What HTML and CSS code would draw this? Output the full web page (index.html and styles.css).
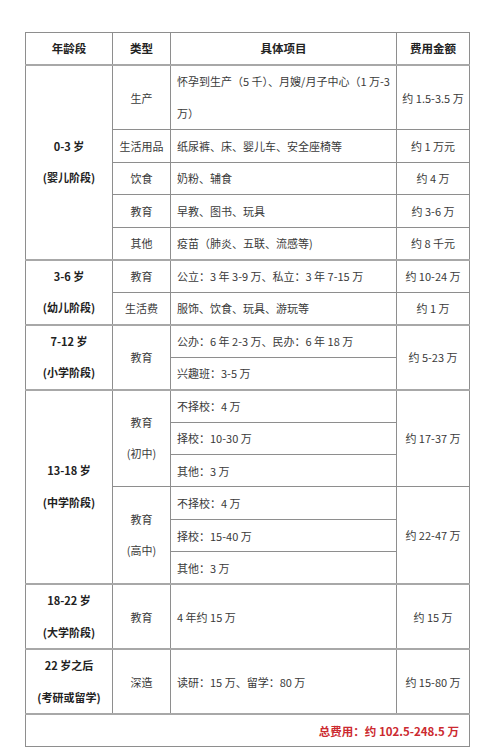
FILE: index.html
```html
<!DOCTYPE html>
<html lang="zh-CN">
<head>
<meta charset="utf-8">
<title>养孩子费用</title>
<link rel="stylesheet" href="styles.css">
</head>
<body>
<table class="cost">
  <colgroup>
    <col class="c-age"><col class="c-type"><col class="c-item"><col class="c-fee">
  </colgroup>
  <thead>
    <tr><th>年龄段</th><th>类型</th><th>具体项目</th><th>费用金额</th></tr>
  </thead>
  <tbody class="group">
    <tr class="r2">
      <td class="age" rowspan="5"><span class="two">0-3 岁<br>(婴儿阶段)</span></td>
      <td class="type">生产</td>
      <td class="item wrap">怀孕到生产（5 千）、月嫂/月子中心（1 万-3 万）</td>
      <td class="fee">约 1.5-3.5 万</td>
    </tr>
    <tr><td class="type">生活用品</td><td class="item">纸尿裤、床、婴儿车、安全座椅等</td><td class="fee">约 1 万元</td></tr>
    <tr><td class="type">饮食</td><td class="item">奶粉、辅食</td><td class="fee">约 4 万</td></tr>
    <tr><td class="type">教育</td><td class="item">早教、图书、玩具</td><td class="fee">约 3-6 万</td></tr>
    <tr><td class="type">其他</td><td class="item">疫苗（肺炎、五联、流感等)</td><td class="fee">约 8 千元</td></tr>
  </tbody>
  <tbody class="group">
    <tr>
      <td class="age" rowspan="2"><span class="two">3-6 岁<br>(幼儿阶段)</span></td>
      <td class="type">教育</td><td class="item">公立：3 年 3-9 万、私立：3 年 7-15 万</td><td class="fee">约 10-24 万</td>
    </tr>
    <tr><td class="type">生活费</td><td class="item">服饰、饮食、玩具、游玩等</td><td class="fee">约 1 万</td></tr>
  </tbody>
  <tbody class="group">
    <tr>
      <td class="age" rowspan="2"><span class="two">7-12 岁<br>(小学阶段)</span></td>
      <td class="type" rowspan="2">教育</td><td class="item">公办：6 年 2-3 万、民办：6 年 18 万</td><td class="fee" rowspan="2">约 5-23 万</td>
    </tr>
    <tr><td class="item">兴趣班：3-5 万</td></tr>
  </tbody>
  <tbody class="group">
    <tr>
      <td class="age" rowspan="6"><span class="two">13-18 岁<br>(中学阶段)</span></td>
      <td class="type" rowspan="3"><span class="two">教育<br>(初中)</span></td><td class="item">不择校：4 万</td><td class="fee" rowspan="3">约 17-37 万</td>
    </tr>
    <tr><td class="item">择校：10-30 万</td></tr>
    <tr><td class="item">其他：3 万</td></tr>
    <tr>
      <td class="type" rowspan="3"><span class="two">教育<br>(高中)</span></td><td class="item">不择校：4 万</td><td class="fee" rowspan="3">约 22-47 万</td>
    </tr>
    <tr><td class="item">择校：15-40 万</td></tr>
    <tr><td class="item">其他：3 万</td></tr>
  </tbody>
  <tbody class="group">
    <tr class="r2">
      <td class="age"><span class="two">18-22 岁<br>(大学阶段)</span></td>
      <td class="type">教育</td><td class="item">4 年约 15 万</td><td class="fee">约 15 万</td>
    </tr>
  </tbody>
  <tbody class="group">
    <tr class="r2">
      <td class="age"><span class="two">22 岁之后<br>(考研或留学)</span></td>
      <td class="type">深造</td><td class="item">读研：15 万、留学：80 万</td><td class="fee">约 15-80 万</td>
    </tr>
  </tbody>
  <tbody class="group">
    <tr><td class="total" colspan="4">总费用：约 102.5-248.5 万</td></tr>
  </tbody>
</table>
</body>
</html>
```

FILE: styles.css
```css
html, body {
  margin: 0;
  padding: 0;
  background: #ffffff;
}

body {
  font-family: "Noto Sans CJK SC", "Noto Sans", "Liberation Sans", sans-serif;
  font-size: 11px;
  color: #3a3a3a;
}

.cost {
  border-collapse: collapse;
  table-layout: fixed;
  width: 444px;
  height: 714px;
  margin: 32px 0 0 25px;
  border: 1px solid #9a9a9a;
}

.c-age { width: 87px; }
.c-type { width: 58px; }
.c-item { width: 226px; }
.c-fee { width: 73px; }

.cost tr {
  height: 32.45px;
}

.cost tr.r2 {
  height: 64.9px;
}

.cost th,
.cost td {
  border: 1px solid #8e8e8e;
  padding: 0;
  vertical-align: middle;
  text-align: center;
  line-height: 16px;
  white-space: nowrap;
}

.cost th {
  font-weight: bold;
  color: #222222;
  font-size: 11.5px;
}

.group {
  border-top: 2px solid #a8a8a8;
}

.age {
  font-weight: bold;
  color: #222222;
}

.two {
  display: block;
  line-height: 31.5px;
}

.cost td.item {
  text-align: left;
  padding-left: 6px;
  padding-right: 4px;
}

.cost td.wrap {
  white-space: normal;
  line-height: 31.5px;
}

.cost td.total {
  text-align: right;
  padding-right: 10px;
  color: #cc2a30;
  font-weight: bold;
  font-size: 11.5px;
}
```
